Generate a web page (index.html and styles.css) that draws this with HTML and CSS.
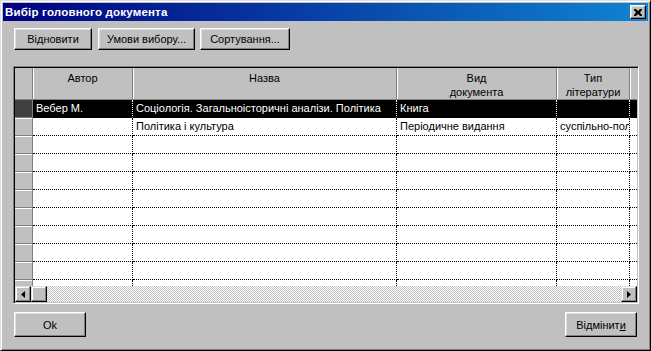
FILE: index.html
```html
<html>
<head>
<title>Вибір головного документа</title>
<link rel="stylesheet" href="styles.css">
</head>
<body>
<div class="window">

	<div class="titlebar">
		<span class="title">Вибір головного документа</span>
		<button type="button" class="close">
			<svg width="8" height="7" viewBox="0 0 8 7"><path d="M0 0h2l2 2 2-2h2v1l-2 2.5 2 2.5v1h-2l-2-2-2 2h-2v-1l2-2.5-2-2.5z" fill="#000"/></svg>
		</button>
	</div>

	<div class="toolbar">
		<button type="button" class="btn w-restore">Відновити</button>
		<button type="button" class="btn w-cond">Умови вибору...</button>
		<button type="button" class="btn w-sort">Сортування...</button>
	</div>

	<div class="grid">
		<div class="grid-body">
			<table>
				<colgroup>
					<col style="width: 18px">
					<col style="width: 100px">
					<col style="width: 264px">
					<col style="width: 160px">
					<col style="width: 73px">
					<col style="width: 7px">
				</colgroup>
				<tr class="head">
					<th class="sel"></th>
					<th>Автор</th>
					<th>Назва</th>
					<th>Вид<br>документа</th>
					<th>Тип<br>літератури</th>
					<th></th>
				</tr>
				<tr class="current">
					<td class="sel"></td>
					<td>Вебер М.</td>
					<td>Соціологія. Загальноісторичні аналізи. Політика</td>
					<td>Книга</td>
					<td></td>
					<td></td>
				</tr>
				<tr>
					<td class="sel"></td>
					<td></td>
					<td>Політика і культура</td>
					<td>Періодичне видання</td>
					<td>суспільно-політична</td>
					<td></td>
				</tr>
				<tr><td class="sel"></td><td></td><td></td><td></td><td></td><td></td></tr>
				<tr><td class="sel"></td><td></td><td></td><td></td><td></td><td></td></tr>
				<tr><td class="sel"></td><td></td><td></td><td></td><td></td><td></td></tr>
				<tr><td class="sel"></td><td></td><td></td><td></td><td></td><td></td></tr>
				<tr><td class="sel"></td><td></td><td></td><td></td><td></td><td></td></tr>
				<tr><td class="sel"></td><td></td><td></td><td></td><td></td><td></td></tr>
				<tr><td class="sel"></td><td></td><td></td><td></td><td></td><td></td></tr>
				<tr><td class="sel"></td><td></td><td></td><td></td><td></td><td></td></tr>
				<tr><td class="sel"></td><td></td><td></td><td></td><td></td><td></td></tr>
			</table>
		</div>
		<div class="hscroll">
			<div class="sbtn">
				<svg width="4" height="7" viewBox="0 0 4 7"><path d="M4 0v7L0 3.5z" fill="#000"/></svg>
			</div>
			<div class="sbtn thumb"></div>
			<div class="track"></div>
			<div class="sbtn">
				<svg width="4" height="7" viewBox="0 0 4 7"><path d="M0 0v7l4-3.5z" fill="#000"/></svg>
			</div>
		</div>
	</div>

	<div class="footer">
		<button type="button" class="btn w-ok">Ok</button>
		<button type="button" class="btn w-cancel">Відмінит<u>и</u></button>
	</div>

</div>
</body>
</html>
```

FILE: styles.css
```css
body {margin: 0; background: #c0c0c0; font-family: "Liberation Sans", Arial, sans-serif; font-size: 11px;}

/* Window frame */
.window {
		width: 651px;
		height: 351px;
		box-sizing: border-box;
		background: #c0c0c0;
		border: 1px solid;
		border-color: #dfdfdf #000 #000 #dfdfdf;
		box-shadow: inset 1px 1px #fff, inset -1px -1px #808080;
		padding: 2px;
}

.titlebar {
		height: 18px;
		display: flex;
		align-items: center;
		justify-content: space-between;
		padding: 0 2px 0 2px;
		background: linear-gradient(to right, #000080, #1084d0);
}
.title {color: #fff; font-weight: bold; font-size: 11.5px; letter-spacing: 0.2px;}

.close {
		width: 16px;
		height: 14px;
		padding: 0;
		display: flex;
		align-items: center;
		justify-content: center;
		background: #c0c0c0;
		border: 1px solid;
		border-color: #fff #000 #000 #fff;
		box-shadow: inset -1px -1px #808080, inset 1px 1px #dfdfdf;
}

/* Buttons */
.btn {
		height: 22px;
		padding: 0;
		font-family: "Liberation Sans", Arial, sans-serif;
		font-size: 11px;
		color: #000;
		background: #c0c0c0;
		border: 1px solid;
		border-color: #fff #000 #000 #fff;
		box-shadow: inset -1px -1px #808080, inset 1px 1px #dfdfdf;
}
.toolbar {display: flex; gap: 6px; padding: 7px 0 0 11px;}
.w-restore {width: 78px;}
.w-cond {width: 97px;}
.w-sort {width: 90px; margin-left: -1px;}

/* Grid */
.grid {
		margin: 16px 0 0 10px;
		width: 626px;
		height: 238px;
		box-sizing: border-box;
		border: 1px solid;
		border-color: #808080 #fff #fff #808080;
		box-shadow: inset 1px 1px #000, inset -1px -1px #c0c0c0;
		padding: 1px;
		display: flex;
		flex-direction: column;
}
.grid-body {flex: 1; overflow: hidden; background: #fff;}

table {table-layout: fixed; border-collapse: separate; border-spacing: 0; width: 622px; font-size: 11px; font-family: "Liberation Sans", Arial, sans-serif;}
th, td {padding: 0; overflow: hidden; white-space: nowrap; font-weight: normal; font-size: 11px;}

.head th {
		vertical-align: top;
		text-align: center;
		line-height: 14px;
		padding-top: 3px;
		box-sizing: border-box;
		height: 30px;
		background: #c0c0c0;
		border-right: 1px solid #808080;
		border-bottom: 1px solid #808080;
		box-shadow: inset 1px 0 #fff;
}
.head th:first-child {box-shadow: none;}
.head th:last-child {border-right: 0;}

td {
		box-sizing: border-box;
		height: 18px;
		padding-left: 3px;
		line-height: 17px;
		border-right: 1px dotted #000;
		border-bottom: 1px dotted #000;
		background-clip: padding-box;
}
td:last-child {border-right: 0;}

td.sel {
		padding: 0;
		background: #c0c0c0;
		border-right: 1px solid #808080;
		border-bottom: 1px solid #808080;
		box-shadow: inset 0 1px #fff;
}

tr.current td {background: #000; color: #fff; border-right-color: #fff; background-clip: border-box;}
tr.current td.sel {background: #404040; border-right-color: #808080; box-shadow: none;}

/* Horizontal scroll bar */
.hscroll {display: flex; height: 16px;}
.sbtn {
		width: 16px;
		height: 16px;
		box-sizing: border-box;
		display: flex;
		align-items: center;
		justify-content: center;
		background: #c0c0c0;
		border: 1px solid;
		border-color: #dfdfdf #000 #000 #dfdfdf;
		box-shadow: inset -1px -1px #808080, inset 1px 1px #fff;
}
.track {flex: 1; background: repeating-conic-gradient(#c0c0c0 0 25%, #fff 0 50%) 0 0 / 2px 2px;}

/* Footer */
.footer {display: flex; justify-content: space-between; padding: 8px 11px 0 11px;}
.w-ok {width: 72px; height: 25px;}
.w-cancel {width: 72px; height: 25px;}
```
